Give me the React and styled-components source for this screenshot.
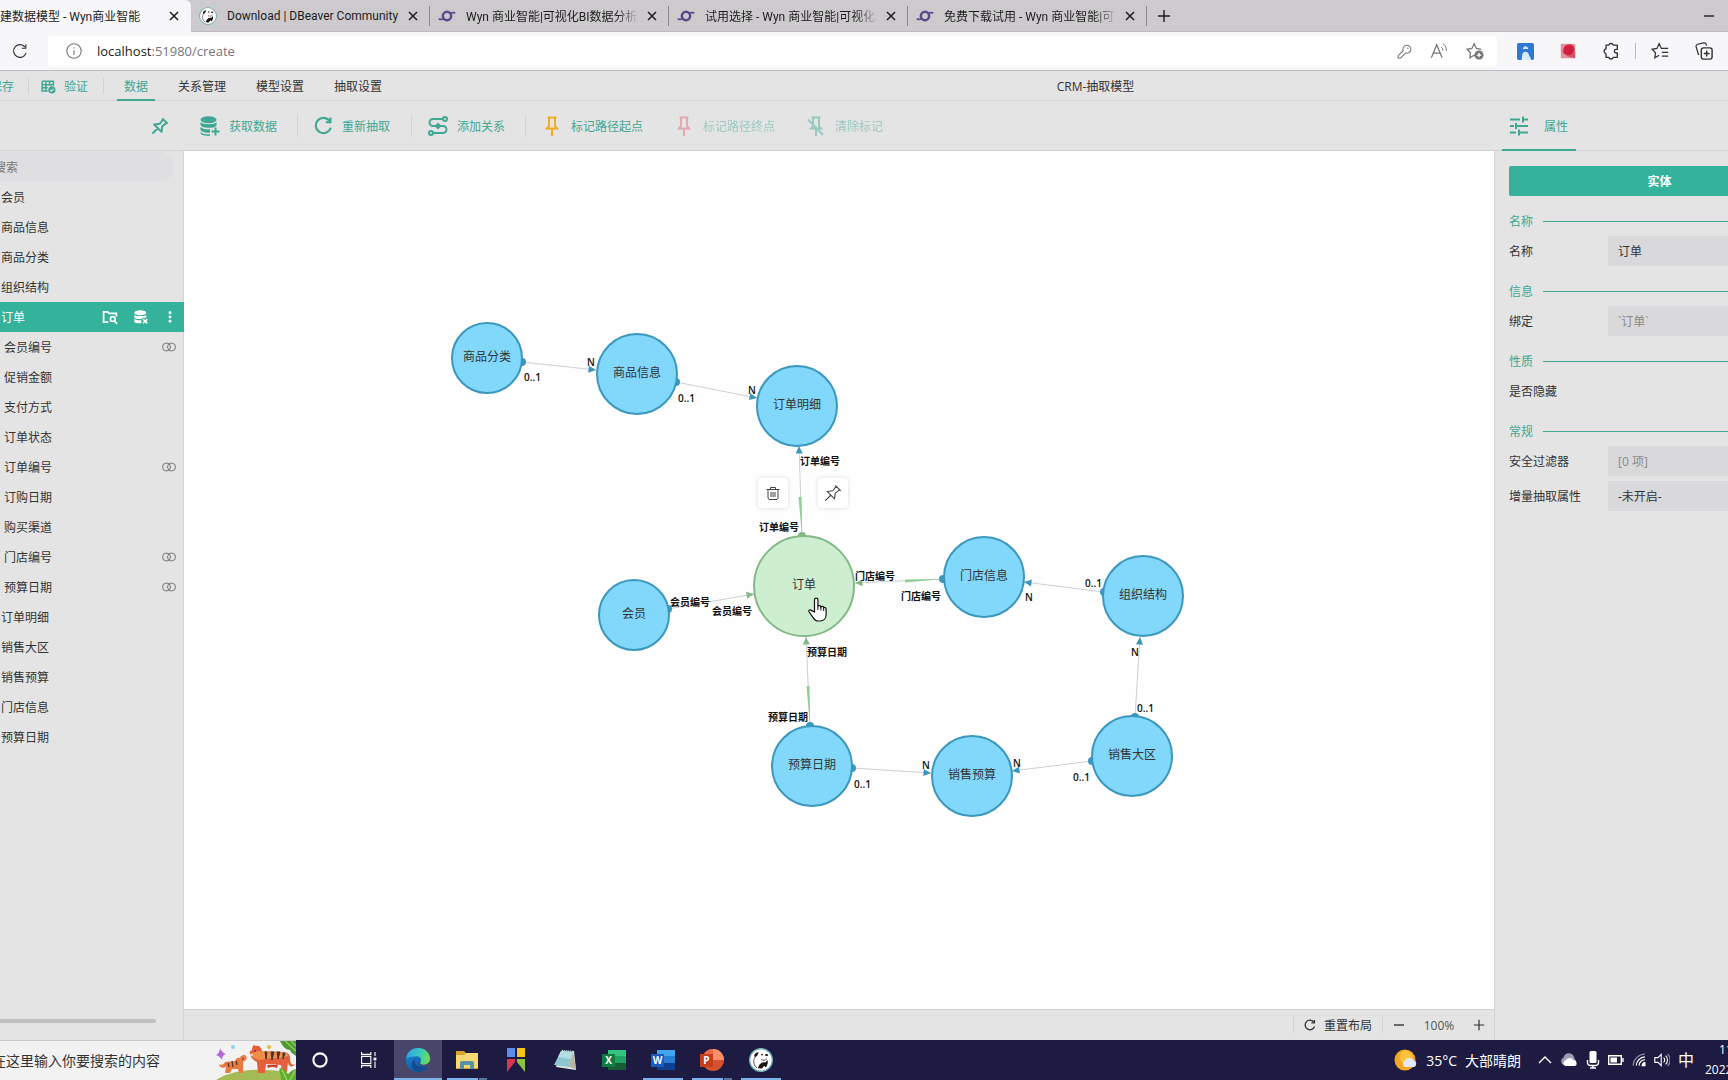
import React from "react";
import styled, { createGlobalStyle, css } from "styled-components";

const colors = {
  primary: "#35b29b",
  primaryText: "#3fa892",
  text: "#333",
  panel: "#e4e4e4",
  field: "#d9d9db",
  line: "#d3d3d5",
  taskbar: "#1d1b41",
  blue: "#82d8fb",
  blueDark: "#3a97bd",
  green: "#cdefd0",
  greenDark: "#84b987",
};

const GlobalStyle = createGlobalStyle`
  * {
    box-sizing: border-box;
  }

  body {
    margin: 0;
    overflow: hidden;
  }

  body, button, input, select {
    font-family: "Open Sans", "Noto Sans CJK SC", sans-serif;
    font-size: 12px;
  }

  button, input, select {
    border: 0;
    padding: 0;
    margin: 0;
    color: inherit;
    background: none;
  }

  svg {
    display: block;
    flex: none;
  }
`;

/* ---------- icons ---------- */

const Svg = ({ w = 16, h, box = "0 0 20 20", children }) => (
  <svg
    width={w}
    height={h || w}
    viewBox={box}
    fill="none"
    stroke="currentColor"
    strokeWidth="1.4"
    aria-hidden="true"
  >
    {children}
  </svg>
);

const CloseIcon = () => (
  <Svg w={10} box="0 0 10 10">
    <path d="M1 1l8 8M9 1l-8 8" strokeWidth="1.5" />
  </Svg>
);

const PlusIcon = ({ w = 14 }) => (
  <Svg w={w} box="0 0 14 14">
    <path d="M7 1v12M1 7h12" />
  </Svg>
);

const WynLogo = () => (
  <Svg w={18}>
    <g stroke="#5b4a8a" strokeLinecap="round">
      <circle cx="10" cy="10" r="4.6" strokeWidth="2.8" />
      <path d="M1.5 13.5c1.8.4 3.4.2 5-.5M18.5 6.5c-1.8-.5-3.4-.3-5 .5" strokeWidth="2" />
    </g>
  </Svg>
);

const BeaverLogo = ({ w = 18 }) => (
  <Svg w={w} box="0 0 24 24">
    <circle cx="12" cy="12" r="11.3" fill="#fff" stroke="#78b6b9" strokeWidth="1.4" />
    <g fill="#1d1512" stroke="none">
      <path d="M9.8 4.2C7.500 4 5.600 5.400 5.200 7.800l.8 1.400 2-1.200z" />
      <circle cx="13" cy="6.600" r="0.900" />
      <ellipse cx="17.600" cy="7" rx="1.600" ry="1.100" />
      <path d="M13 14.500l3.600-.2 1.800-2.300c.9 2.600 0 5.600-1.900 7.400l-1.300-1.600-2.200 2.800-4.200-.4 1.700-3.600z" />
    </g>
    <path d="M6 9c-1.500 2.500-1.600 5-.6 8l2.400 3M12 11.500c2 1.200 4.500.8 6-.8" stroke="#3a2e28" strokeWidth="0.800" />
  </Svg>
);

const ReloadIcon = ({ w = 16, bold }) => (
  <Svg w={w}>
    <g strokeWidth={bold ? 2.2 : 1.4}>
      <path d="M17.6 12.3A8 8 0 1 1 16.3 5.1" />
      <path d="M17.3 1.5v5h-5" />
    </g>
  </Svg>
);

const InfoIcon = () => (
  <Svg>
    <circle cx="10" cy="10" r="9" />
    <path d="M10 9v6M10 5.3v1.6" />
  </Svg>
);

const KeyIcon = () => (
  <Svg w={15}>
    <path d="M8.3 9a5.3 5.3 0 1 1 3.2 3l-6.600 6.600H1.500v-3z" />
    <circle cx="14.5" cy="5.600" r="1" fill="currentColor" stroke="none" />
  </Svg>
);

const ReadAloudIcon = () => (
  <Svg w={18}>
    <path d="M1.5 17.500L7.500 3l6 14.500M3.800 12.300h7.400" />
    <path d="M12.5 5.500a4 4 0 0 1 1.500 4M14.500 2a8 8 0 0 1 3.500 8" strokeWidth="1.100" />
  </Svg>
);

const StarAddIcon = () => (
  <Svg w={18}>
    <path d="M12 16.200L9 14.800l-4.700 2.700.7-5.500-3.800-3.900 5.400-.9L9 2l2.500 5.200 5.400.9" />
    <circle cx="14.500" cy="14.500" r="5" fill="currentColor" stroke="none" />
    <path d="M14.500 12v5M12 14.500h5" stroke="#fff" />
  </Svg>
);

const FavoritesIcon = () => (
  <Svg w={18}>
    <path d="M9 14.800l-4.700 2.700.7-5.500-3.800-3.900 5.400-.9L9 2l2.500 5.200h7.700M12 11.500h7.200M12 15.800h7.200" />
  </Svg>
);

const ProfileExtIcon = () => (
  <Svg w={17}>
    <rect width="20" height="20" rx="2" fill="#2f78d3" stroke="none" />
    <path d="M5.500 20l.5-6a4.200 5.500 0 0 1 8 0l3 6z" fill="#dcebfa" stroke="none" />
    <path d="M7 7V5h2V3.500h2V5h2v2z" fill="#dcebfa" stroke="none" />
  </Svg>
);

const RedExtIcon = () => (
  <Svg w={16}>
    <path d="M1 1h18v18H1z" fill="#e0909f" stroke="none" />
    <path d="M1 7q3 6 9 8l9-4v8C10 18 3 14 1 7z" fill="#cf5369" stroke="none" />
    <path d="M4 10c0-5 3-8 8-8 4 0 6 3 6 6s-3 7-7 7-7-2-7-5z" fill="#d61f3c" stroke="none" />
  </Svg>
);

const PuzzleIcon = () => (
  <Svg w={18}>
    <path
      d="M4.500 3.500h3a2.600 2.600 0 0 1 5 0H17v4.700h-1.300a2 2 0 0 0 0 4H17V17h-4.500a2.600 2.600 0 0 1-5 0h-3v-3.700a3 3 0 0 1 0-5.800z"
      strokeWidth="1.500"
      strokeLinejoin="round"
    />
  </Svg>
);

const CollectionsIcon = () => (
  <Svg w={18}>
    <path d="M4 14.500L1.300 5.500a2.500 2.500 0 0 1 1.700-3L9.500 1a2.500 2.500 0 0 1 3 1.800l.4 1.200" />
    <rect x="7" y="6.500" width="12" height="12.500" rx="2.500" strokeWidth="1.600" />
    <path d="M13 9.500v6.500M9.800 12.800h6.500" strokeWidth="1.600" />
  </Svg>
);

const TableCheckIcon = () => (
  <Svg w={15}>
    <path d="M1.500 3h15v6M1.500 3v13H9M1.500 7.500h15M1.500 11.800H9M6.500 3v13M11.500 3v6" strokeWidth="2" />
    <circle cx="14.500" cy="14.500" r="4.800" fill="currentColor" stroke="none" />
    <path d="M12.200 14.500l1.700 1.700 3-3" stroke={colors.panel} />
  </Svg>
);

const PinIcon = ({ bold }) => (
  <Svg w={18}>
    <path
      d="M12.500 1.500l6 6M13.500 2.700L9.800 7.500 3.500 8.300l8.200 8.200.8-6.300 4.800-3.700M7.500 12.500L1.500 18.500"
      strokeWidth={bold ? 2.2 : 1.2}
      strokeLinejoin="round"
    />
  </Svg>
);

const DbAddIcon = () => (
  <Svg w={20}>
    <g fill="currentColor" stroke="none">
      <ellipse cx="8.500" cy="3.700" rx="8" ry="3.500" />
      <path d="M.5 6c2 3 14 3 16 0v3.500c-2 2-3 2.300-8 2.300s-7.500-1.300-8-3z" />
      <path d="M.5 11c1.500 2 5 2.500 9.500 2.300v3.500C5 17 1.500 16 .5 14zM.5 16c2 2 5 2.300 9.500 2.300v1.500C5 20.200 1 19 .5 17z" />
    </g>
    <path d="M15.500 11.500v8M11.500 15.500h8" strokeWidth="2" />
  </Svg>
);

const RelationIcon = () => (
  <Svg w={20}>
    <g strokeWidth="2">
      <path d="M14.500 3H5a3.500 3.500 0 0 0 0 7h10a3.500 3.500 0 0 1 0 7H5.500" />
      <circle cx="17" cy="3" r="2" />
      <circle cx="3" cy="17" r="2" />
    </g>
    <path d="M10 6.500l3.500 3.500-3.500 3.500L6.500 10z" fill="currentColor" stroke="none" />
  </Svg>
);

const PathPinIcon = ({ off }) => (
  <Svg w={20}>
    <path d="M5.500 1.500h9M7 1.500v8.500l-2 2.500h10l-2-2.500V1.500M10 12.500V20" strokeWidth="2" />
    {off && <path d="M2 3.500l15 15.500" strokeWidth="2" />}
  </Svg>
);

const TuneIcon = () => (
  <Svg w={20}>
    <path d="M1 3.500h10M14 3.500h5M14 .5v6M1 10h4M8 10h11M7 7v6M1 16.500h6M10 16.500h9M10 13.500v6" strokeWidth="2" />
  </Svg>
);

const FolderSearchIcon = () => (
  <Svg w={16}>
    <path d="M8 16.500H2v-13h5l2 2h9v4" strokeWidth="2.200" />
    <circle cx="13.500" cy="12.500" r="3" strokeWidth="2" />
    <path d="M15.500 15l3.500 3.500" strokeWidth="2.200" />
  </Svg>
);

const DbRemoveIcon = () => (
  <Svg w={14}>
    <g fill="currentColor" stroke="none">
      <ellipse cx="9" cy="4" rx="8.500" ry="3.500" />
      <path d="M.5 7c3 2.300 14 2.300 17 0v4H12v1.500c-5 .6-9 .2-11.500-1.500z" />
      <path d="M.5 13c3 1.500 6 2 10 1.600V19c-5 .3-9-.3-10-2z" />
    </g>
    <path d="M13 13l6 6M19 13l-6 6" strokeWidth="2.200" />
  </Svg>
);

const MoreIcon = () => (
  <Svg w={12}>
    <g fill="currentColor" stroke="none">
      <circle cx="10" cy="3" r="2.400" />
      <circle cx="10" cy="10" r="2.400" />
      <circle cx="10" cy="17" r="2.400" />
    </g>
  </Svg>
);

const LinkedIcon = () => (
  <Svg w={14} h={10} box="0 0 14 10">
    <g stroke="#777" strokeWidth="1">
      <rect x="0.500" y="1" width="8" height="8" rx="4" />
      <rect x="5.500" y="1" width="8" height="8" rx="4" />
    </g>
  </Svg>
);

const TrashIcon = () => (
  <Svg w={14} box="0 0 14 14">
    <g strokeWidth="1" stroke="#444">
      <path d="M.5 3.500h13M4.500 3.500v-2h5v2M2 3.500v8.500l1 1.500h8l1-1.500V3.500M5 6v5M7 6v5M9 6v5" />
    </g>
  </Svg>
);

const HandCursor = () => (
  <Svg w={19} h={25} box="0 0 19 25">
    <path
      d="M6.500 15V2.800a1.700 1.700 0 0 1 3.400 0v6.400c.4-1 2.800-.8 3 .7.5-.9 2.600-.6 2.800.8.5-.7 2.400-.3 2.400 1.300v5.500c0 3.800-2.300 6.500-6 6.500h-2c-2.500 0-3.700-1.300-5-3.400L1 14.800c-.7-1.500 1-2.600 2.300-1.400z"
      fill="#fff"
      stroke="#111"
      strokeWidth="1.200"
    />
    <path d="M9.900 9v4M12.900 10v3.500M15.700 11v3" stroke="#111" strokeWidth="1" />
  </Svg>
);

const TigerArt = () => (
  <svg width="82" height="39" viewBox="0 0 82 39" aria-hidden="true">
    <path d="M2 39c14-9 34-11 50-10 14 0 24 3 30 8v2z" fill="#a5bb55" />
    <path d="M66 0h16v15c-4-3-5-3-6-6-4 0-7-3-10-9z" fill="#4b9a35" />
    <path d="M71 0l11 10M77 0l5 5" stroke="#8fcb4e" strokeWidth="1.500" />
    <path d="M6 7q2 5 6 6-4 1-4 6-2-4-6-5 4-2 4-7z" fill="#b766d8" />
    <circle cx="19" cy="6" r="2" fill="#8fd2ef" />
    <circle cx="55" cy="6" r="2" fill="#f0b93c" />
    <path d="M36 13c-1-2 0-3 2-4 0-4 2-6 4-4 3-1 5 1 6 5l20 1c5 0 8 2 8 6 0 4 1 8 5 6-2 4-7 3-7-2l-1 10h-5l-1-7-15-1-1 9h-7l-1-11c-4-2-6-4-7-8z" fill="#e4603a" />
    <path d="M36 13c4-2 8-3 12-3l20 1c4 0 6 2 6 4-10 4-22 1-27 4-4 0-9-2-11-6z" fill="#f08f4c" />
    <path d="M51 11l1 7 1-7zM57 11l1 8 2-8zM63 11l1 7 2-7zM69 12l0 6 2-6z" fill="#4e3226" stroke="#4e3226" />
    <path d="M53 24h11l-1 3q-5-2-9 0z" fill="#c8432f" />
    <path d="M21 20c1-3 3-4 5-3 1-3 3-3 5-3l2 3-4 6v9h-4l-1-4h-6l-2 4h-5l1-6c-5 2-7-1-7-3 3 2 5 0 6-2z" fill="#ea7a42" />
    <path d="M14 22l1 4M18 20l1 6M22 20l1 4" stroke="#4e3226" strokeWidth="1.200" />
    <circle cx="29" cy="18" r="0.700" fill="#222" />
    <path d="M36 14h3M29 21h3" stroke="#fff" strokeWidth="1.200" />
    <circle cx="41" cy="10" r="0.800" fill="#222" />
    <path d="M67 39c0-7-3-9-1-12 5 1 6 3 8 7 1-3 4-5 8-6v11z" fill="#5fae34" />
    <path d="M68 29l5 10M81 30l-5 9" stroke="#a8da5c" strokeWidth="1.200" />
  </svg>
);

const CortanaIcon = () => (
  <Svg w={16}>
    <circle cx="10" cy="10" r="8.300" strokeWidth="2.600" />
  </Svg>
);

const TaskViewIcon = () => (
  <Svg w={16}>
    <path d="M.7 0v3h11.600V0M.7 20v-3h11.600v3M.7 5.500h11.600v9H.7zM17.500 0v5M17.500 12v8" />
    <rect x="15.700" y="7" width="3.500" height="3.500" fill="currentColor" stroke="none" />
  </Svg>
);

const EdgeIcon = () => (
  <svg width="24" height="24" viewBox="0 0 24 24" aria-hidden="true">
    <defs>
      <linearGradient id="edgeTop" x1="0" x2="1" y1="0.300" y2="0.500">
        <stop offset="0" stopColor="#2ea3e0" />
        <stop offset="0.550" stopColor="#38c8c0" />
        <stop offset="1" stopColor="#6be04d" />
      </linearGradient>
      <linearGradient id="edgeBody" x1="0" x2="0.600" y1="0" y2="1">
        <stop offset="0" stopColor="#1b8bd4" />
        <stop offset="1" stopColor="#0c59a4" />
      </linearGradient>
    </defs>
    <circle cx="12" cy="12" r="12" fill="url(#edgeBody)" />
    <path d="M.2 10.500C1 4 6 0 12 0c7 0 12 5 12 10.500 0 4-3 6.300-6.500 6.300-2.500 0-4-1-3.200-2.300 1.800-3 0-6.300-3.800-6.300C6 8.200 2.500 9.500.2 10.500z" fill="url(#edgeTop)" />
    <path d="M9.600 10.500c-2.500 5.500 2 10.500 12 7.500 1-.3 1.400 0 .8.800-3.200 4.500-9 6-13.900 4.200-4.500-3-3.700-10 1.100-12.500z" fill="#144c94" />
    <path d="M14.300 14.500c-1 1.500.7 2.400 3.200 2.400 2.300 0 4.600-1 5.700-3l.8 3-2.200 1.500c-4 .9-9.500 0-10.300-4.500z" fill="#4a466b" />
  </svg>
);

const ExplorerIcon = () => (
  <svg width="24" height="24" viewBox="0 0 24 24" aria-hidden="true">
    <path d="M1 3h8l2 2h12v16H1z" fill="#d9a02e" />
    <path d="M1 7h8l2-2h12v15H1z" fill="#f8d873" />
    <path d="M5 21v-6q0-2 2-2h10q2 0 2 2v6h-4v-4H9v4z" fill="#5691a9" />
  </svg>
);

const FourColorIcon = () => (
  <svg width="20" height="24" viewBox="0 0 20 24" aria-hidden="true">
    <path d="M1 0h8v9H1z" fill="#5b8cf0" />
    <path d="M11 0h8v9h-8z" fill="#f6c51d" />
    <path d="M1 11h8v3l-8 10z" fill="#d93550" />
    <path d="M11 11h8v13l-8-10z" fill="#8ac43f" />
  </svg>
);

const NotepadIcon = () => (
  <svg width="24" height="24" viewBox="0 0 24 24" aria-hidden="true">
    <path d="M9 2l12 1 2 19-20-3z" fill="#e4e4dc" />
    <path d="M8 3l12 1-4 15-15-2z" fill="#8cc7cf" />
    <path d="M8 3l12 1-2 7L5 9z" fill="#b4dde2" />
    <path d="M20 4l3 17-7-2z" fill="#b9b29c" />
    <path d="M8 2l12 1.500" stroke="#555" strokeWidth="1.200" strokeDasharray="1 1" />
  </svg>
);

const OfficeBadge = styled.span`
  display: grid;
  place-items: center;
  width: 13px;
  height: 13px;
  grid-area: 1 / 1;
  background: ${(props) => props.$color};
  color: #fff;
  font-size: 10px;
  font-weight: 700;
  line-height: 13px;
`;

const OfficeBox = styled.span`
  display: grid;
  align-items: center;

  > svg {
    grid-area: 1 / 1;
  }
`;

const OfficeIcon = ({ letter, dark, shades, round }) => (
  <OfficeBox>
    <svg width="24" height="22" viewBox="0 0 24 22" aria-hidden="true">
      {round ? (
        <>
          <circle cx="13" cy="11" r="11" fill={shades[2]} />
          <path d="M13 0v11h11A11 11 0 0 0 13 0z" fill={shades[0]} />
          <path d="M13 0A11 11 0 0 0 2 11h11z" fill={shades[1]} />
        </>
      ) : (
        <>
          <path d="M6 1h18v20H6z" fill={shades[2]} />
          <path d="M6 1h18v6H6z" fill={shades[0]} />
          <path d="M6 7h18v7H6z" fill={shades[1]} />
        </>
      )}
    </svg>
    <OfficeBadge $color={dark}>{letter}</OfficeBadge>
  </OfficeBox>
);

const WeatherIcon = () => (
  <svg width="24" height="22" viewBox="0 0 24 22" aria-hidden="true">
    <circle cx="11" cy="11" r="10.500" fill="#f5a623" />
    <circle cx="12" cy="8" r="6.500" fill="#fbc23c" />
    <path d="M11 18a3.500 3.500 0 0 1 0-6.500 5 5 0 0 1 8.500-.5A3.700 3.700 0 0 1 20 18z" fill="#e3e8f6" />
  </svg>
);

const CloudIcon = () => (
  <svg width="18" height="14" viewBox="0 0 18 14" aria-hidden="true">
    <path d="M4 12a4 4 0 0 1-.5-7.500A5.500 5.500 0 0 1 14 4l2 5z" fill="#9c9bb0" />
    <path d="M5 13a3.300 3.300 0 0 1 1-6 4.500 4.500 0 0 1 7.500 0A3.200 3.200 0 0 1 15 13z" fill="#fff" />
  </svg>
);

const MicIcon = () => (
  <Svg w={14} h={18} box="0 0 14 18">
    <rect x="3.500" y="0" width="7" height="12" rx="1.500" fill="#fff" stroke="none" />
    <path d="M1.500 9v2.500c0 2 1.500 3 3.500 3h4c2 0 3.500-1 3.500-3V9M7 14.500V17M4 17h6" />
  </Svg>
);

const BatteryIcon = () => (
  <Svg w={16} h={10} box="0 0 16 10">
    <path d="M.7.7h12.600v8.600H.7zM15 3v4" />
    <path d="M2.500 2.500H9v5H2.500z" fill="#fff" stroke="none" />
  </Svg>
);

const WifiIcon = () => (
  <Svg w={14}>
    <g strokeWidth="1.600">
      <path d="M1.500 18C2 9 9 2 18.500 1.500" opacity=".5" />
      <path d="M6 18c.5-7 6-12 12.500-12.500M10 18c.5-4.500 4-8 8.500-8.500" />
      <path d="M14.500 18c.3-2.500 2-4 4-4.200V18z" fill="#fff" />
    </g>
  </Svg>
);

const SpeakerIcon = () => (
  <Svg w={16}>
    <path d="M1 7v6h4l4 4V3L5 7zM12 7a4 4 0 0 1 0 6M14.500 4.500a7.500 7.500 0 0 1 0 11" />
    <path d="M17 2.500a10.500 10.500 0 0 1 0 15" opacity=".5" />
  </Svg>
);

/* ---------- browser chrome ---------- */

const Page = styled.div`
  display: flex;
  flex-direction: column;
  height: 100vh;
  overflow: hidden;
  color: ${colors.text};
  background: ${colors.panel};
`;

const TabStrip = styled.div`
  display: flex;
  align-items: stretch;
  flex: none;
  height: 32px;
  margin-left: -48px;
  background: #cdcacd;
  color: #1c1c1c;
  font-family: Roboto, "Noto Sans CJK SC", sans-serif;
`;

const Tab = styled.div`
  display: flex;
  align-items: center;
  flex: 0 1 239px;
  padding: 0 12px 0 8px;
  min-width: 0;
  border-bottom: 1px solid #bcb9bd;

  ${({ $active }) =>
    $active &&
    css`
      background: #f7f6f9;
      border-bottom-color: #f7f6f9;
      border-radius: 0 6px 0 0;
    `}

  ${({ $divider }) =>
    $divider &&
    css`
      background: linear-gradient(#8c8a8d, #8c8a8d) right 6px / 1px 20px no-repeat;
    `}
`;

const TabTitle = styled.span`
  flex: 1;
  margin: 0 8px 0 10px;
  overflow: hidden;
  white-space: nowrap;
  ${({ $fade }) =>
    $fade &&
    css`
      mask-image: linear-gradient(90deg, #000 calc(100% - 22px), transparent);
    `}
`;

const TabFill = styled.div`
  display: flex;
  align-items: center;
  justify-content: space-between;
  flex: 1;
  padding: 0 14px 0 10px;
  border-bottom: 1px solid #bcb9bd;
`;

const IconButton = styled.button`
  display: grid;
  place-items: center;
`;

const AddressBar = styled.div`
  display: flex;
  align-items: center;
  flex: none;
  height: 39px;
  padding: 0 15px 0 12px;
  gap: 20px;
  background: #f7f6f9;
  border-bottom: 1px solid #bdbabe;
`;

const AddressField = styled.div`
  display: flex;
  align-items: center;
  flex: 1;
  height: 30px;
  padding: 0 13px 0 18px;
  gap: 18px;
  border-radius: 4px;
  background: #fff;
  color: #77757a;
`;

const Url = styled.div`
  flex: 1;
  margin-left: -3px;
  font-size: 13px;

  b {
    font-weight: 400;
    color: #1c1c1c;
  }
`;

const Extensions = styled.div`
  display: flex;
  align-items: center;
  gap: 26px;
`;

const ExtDivider = styled.i`
  width: 1px;
  height: 16px;
  margin: 0 -11px;
  background: #bbb;
`;

/* ---------- application ---------- */

const Header = styled.header`
  display: flex;
  align-items: center;
  flex: none;
  height: 30px;
  border-bottom: 1px solid ${colors.line};
`;

const HeaderActions = styled.div`
  display: flex;
  align-items: center;
  margin-left: -10px;
  padding-top: 1px;
  color: ${colors.primaryText};
`;

const HeaderAction = styled.button`
  display: flex;
  align-items: center;
  gap: 8px;
`;

const Divider = styled.i`
  width: 1px;
  height: ${(props) => props.$h || 16}px;
  margin: ${(props) => props.$m || "0"};
  background: #d2d2d2;
`;

const Nav = styled.nav`
  display: flex;
  height: 30px;
  gap: 16px;
  flex: 0 0 346px;
`;

const NavLink = styled.a`
  padding: 1px 7px 0;
  line-height: 29px;
  text-decoration: none;
  color: ${(props) => (props.$active ? colors.primaryText : colors.text)};
  box-shadow: inset 0 -2px ${(props) => (props.$active ? colors.primaryText : "transparent")};
`;

const Title = styled.h1`
  flex: 1;
  margin: 0;
  font-size: 12px;
  font-weight: 400;
  text-align: center;
`;

const Tools = styled.div`
  display: flex;
  flex: none;
  height: 50px;
  border-bottom: 1px solid ${colors.line};
`;

const SideHead = styled.div`
  display: flex;
  align-items: center;
  justify-content: flex-end;
  flex: 0 0 184px;
  padding-right: 15px;
  color: ${colors.primaryText};
`;

const ToolButtons = styled.div`
  display: flex;
  align-items: center;
  flex: 1;
`;

const ToolButton = styled.button`
  display: flex;
  align-items: center;
  gap: 9px;
  padding: 0 15px 0 16px;
  height: 30px;
  color: ${colors.primaryText};
  opacity: ${(props) => (props.disabled ? 0.45 : 1)};

  > svg {
    color: ${(props) => props.$icon || "inherit"};
  }
`;

const PropHead = styled.div`
  flex: 0 0 233px;
  padding-left: 7px;
`;

const PropTab = styled.button`
  display: flex;
  align-items: center;
  gap: 15px;
  height: 50px;
  width: 74px;
  padding: 2px 0 0 7px;
  color: ${colors.primaryText};
  border-bottom: 2px solid ${colors.primaryText};
`;

const Body = styled.div`
  display: flex;
  flex: 1;
  min-height: 0;
`;

const Sidebar = styled.aside`
  display: flex;
  flex-direction: column;
  flex: 0 0 184px;
  min-width: 0;
  overflow: hidden;
  background: linear-gradient(${colors.line}, ${colors.line}) right / 1px 100% no-repeat;
`;

const SearchBox = styled.input`
  flex: none;
  width: 190px;
  height: 30px;
  margin: 1px 0 0 -16px;
  padding: 0 10px;
  border-radius: 15px;
  background: #dfdfe2;

  &::placeholder {
    color: #777;
    opacity: 1;
  }
`;

const Tree = styled.ul`
  flex: 1;
  margin: 0;
  padding: 0;
  list-style: none;
`;

const TreeRow = styled.li`
  display: flex;
  align-items: center;
  justify-content: space-between;
  height: 30px;
  padding: 0 8px 0 ${(props) => (props.$child ? 4 : 1)}px;

  ${({ $selected }) =>
    $selected &&
    css`
      background: ${colors.primary};
      color: #fff;
    `}
`;

const RowActions = styled.span`
  display: flex;
  align-items: center;
  gap: 16px;
`;

const ScrollThumb = styled.div`
  width: 156px;
  height: 4px;
  margin-bottom: 17px;
  border-radius: 0 2px 2px 0;
  background: #bfbfbf;
`;

const Workspace = styled.main`
  display: flex;
  flex-direction: column;
  flex: 1;
  min-width: 0;
`;

const Canvas = styled.div`
  position: relative;
  flex: 1;
  overflow: hidden;
  background: #fefefe;
`;

const Links = styled.svg`
  position: absolute;
  inset: 0;
  width: 100%;
  height: 100%;

  text {
    font-size: 10px;
    font-weight: 600;
    fill: #111;
  }
`;

const Node = styled.div`
  position: absolute;
  left: ${(props) => props.$x - props.$r}px;
  top: ${(props) => props.$y - props.$r}px;
  width: ${(props) => props.$r * 2}px;
  height: ${(props) => props.$r * 2}px;
  display: grid;
  place-items: center;
  padding-bottom: 4px;
  border-radius: 50%;
  border: 2px solid ${(props) => (props.$selected ? colors.greenDark : colors.blueDark)};
  background: ${(props) => (props.$selected ? colors.green : colors.blue)};
`;

const FloatButton = styled.button`
  position: absolute;
  left: ${(props) => props.$x}px;
  top: ${(props) => props.$y}px;
  display: grid;
  place-items: center;
  width: 30px;
  height: 30px;
  border-radius: 4px;
  background: #fff;
  color: #444;
  box-shadow: 0 0 5px rgba(0, 0, 30, 0.14);
`;

const Pointer = styled.div`
  position: absolute;
  left: 624px;
  top: 446px;
`;

const StatusBar = styled.div`
  display: flex;
  align-items: center;
  justify-content: flex-end;
  flex: none;
  height: 31px;
  padding-right: 9px;
  border-top: 1px solid ${colors.line};
`;

const ResetButton = styled.button`
  display: flex;
  align-items: center;
  gap: 8px;
  padding: 0 10px;
`;

const ZoomValue = styled.span`
  width: 68px;
  text-align: center;
  color: #555;
`;

const Props = styled.aside`
  flex: 0 0 234px;
  overflow: hidden;
  border-left: 1px solid ${colors.line};
`;

const PropsInner = styled.div`
  width: 315px;
  padding: 15px 0 0 14px;
`;

const EntityButton = styled.button`
  width: 100%;
  height: 30px;
  border-radius: 2px;
  background: ${colors.primary};
  color: #fff;
  font-weight: 600;
`;

const Section = styled.h2`
  display: flex;
  align-items: center;
  gap: 10px;
  height: 30px;
  margin: 10px 0 0;
  font-size: 12px;
  font-weight: 400;
  color: ${colors.primaryText};

  &:after {
    content: "";
    flex: 1;
    height: 1px;
    background: ${colors.primaryText};
  }
`;

const Field = styled.label`
  display: flex;
  align-items: center;
  height: 30px;
  margin-bottom: ${(props) => (props.$tight ? 5 : 0)}px;

  > span {
    flex: 0 0 99px;
  }

  input,
  select,
  button {
    flex: 1;
    height: 30px;
    padding: 0 10px;
    appearance: none;
    text-align: left;
    background: ${colors.field};
    color: ${(props) => (props.$muted ? "#8a8a8a" : colors.text)};
  }
`;

/* ---------- taskbar ---------- */

const Taskbar = styled.footer`
  display: flex;
  flex: none;
  height: 40px;
  background: ${colors.taskbar};
  color: #fff;
`;

const TaskSearch = styled.div`
  display: flex;
  justify-content: space-between;
  width: 296px;
  overflow: hidden;
  background: #f3f2f3;
  border-top: 1px solid #c9c9cb;

  input {
    width: 180px;
    margin-left: -8px;
    font-size: 14px;

    &::placeholder {
      color: #333;
      opacity: 1;
    }
  }
`;

const TaskList = styled.div`
  display: flex;
  gap: 1px;
  flex: 1;
`;

const underlines = {
  none: "none",
  one: "linear-gradient(#7db3ea, #7db3ea) center bottom / 40px 2px no-repeat",
  full: "linear-gradient(#7db3ea, #7db3ea) center bottom / 48px 2px no-repeat",
  stack: "linear-gradient(90deg, #7db3ea 31px, #1d1b41 31px 32px, #56789f 32px) center bottom / 40px 2px no-repeat",
};

const TaskButton = styled.button`
  display: grid;
  place-items: center;
  width: 48px;
  color: #fff;
  background: ${(props) => underlines[props.$line || "none"]};
  background-color: ${(props) => (props.$active ? "#4a466b" : "transparent")};
`;

const Tray = styled.div`
  display: flex;
  align-items: center;
  gap: 8px;
`;

const Weather = styled.div`
  display: flex;
  align-items: center;
  gap: 8px;
  margin-right: 9px;
  font-size: 14px;
`;

const Ime = styled.span`
  font-size: 16px;
  line-height: 20px;
`;

const Clock = styled.div`
  display: flex;
  flex-direction: column;
  align-items: flex-end;
  margin-left: 3px;
  width: 23px;
  line-height: 20px;
  overflow: hidden;
`;

const Time = styled.time`
  width: ${(props) => (props.$short ? 9 : 23)}px;
  white-space: nowrap;
`;

/* ---------- data ---------- */

const tabs = [
  { title: "创建数据模型 - Wyn商业智能", icon: <WynLogo />, active: true },
  { title: "Download | DBeaver Community", icon: <BeaverLogo />, divider: true },
  { title: "Wyn 商业智能|可视化BI数据分析", icon: <WynLogo />, divider: true, fade: true },
  { title: "试用选择 - Wyn 商业智能|可视化", icon: <WynLogo />, divider: true, fade: true },
  { title: "免费下载试用 - Wyn 商业智能|可", icon: <WynLogo />, divider: true, fade: true },
];

const tree = [
  { name: "会员" },
  { name: "商品信息" },
  { name: "商品分类" },
  { name: "组织结构" },
  { name: "订单", selected: true },
  { name: "会员编号", child: true, linked: true },
  { name: "促销金额", child: true },
  { name: "支付方式", child: true },
  { name: "订单状态", child: true },
  { name: "订单编号", child: true, linked: true },
  { name: "订购日期", child: true },
  { name: "购买渠道", child: true },
  { name: "门店编号", child: true, linked: true },
  { name: "预算日期", child: true, linked: true },
  { name: "订单明细" },
  { name: "销售大区" },
  { name: "销售预算" },
  { name: "门店信息" },
  { name: "预算日期" },
];

const nodes = [
  { name: "商品分类", x: 303, y: 207, r: 36 },
  { name: "商品信息", x: 453, y: 223, r: 41 },
  { name: "订单明细", x: 613, y: 255, r: 41 },
  { name: "订单", x: 620, y: 435, r: 51, selected: true },
  { name: "会员", x: 450, y: 464, r: 36 },
  { name: "门店信息", x: 800, y: 426, r: 41 },
  { name: "组织结构", x: 959, y: 445, r: 41 },
  { name: "预算日期", x: 628, y: 615, r: 41 },
  { name: "销售预算", x: 788, y: 625, r: 41 },
  { name: "销售大区", x: 948, y: 605, r: 41 },
];

// from = dot on the source entity, to = arrow tip, flow = start of the highlight
const links = [
  { from: [338, 211], to: [412, 219] },
  { from: [492, 231], to: [573, 247] },
  { from: [618, 385], to: [615, 295], dotGreen: true, flow: [616, 346] },
  { from: [484, 458], to: [570, 443], tipGreen: true },
  { from: [759, 428], to: [671, 432], tipGreen: true, flow: [721, 430] },
  { from: [920, 441], to: [840, 431] },
  { from: [951, 566], to: [956, 486] },
  { from: [908, 610], to: [828, 620] },
  { from: [668, 617], to: [747, 622] },
  { from: [626, 575], to: [622, 486], tipGreen: true, flow: [624, 535] },
];

const labels = [
  ["0..1", 340, 230],
  ["N", 403, 215],
  ["0..1", 494, 251],
  ["N", 564, 243],
  ["订单编号", 616, 314],
  ["订单编号", 575, 380],
  ["会员编号", 486, 455],
  ["会员编号", 528, 464],
  ["门店编号", 671, 429],
  ["门店编号", 717, 449],
  ["N", 841, 450],
  ["0..1", 901, 436],
  ["N", 947, 505],
  ["0..1", 953, 561],
  ["N", 829, 616],
  ["0..1", 889, 630],
  ["0..1", 670, 637],
  ["N", 738, 618],
  ["预算日期", 584, 570],
  ["预算日期", 623, 505],
];

const Link = ({ from, to, flow, dotGreen, tipGreen }) => {
  const angle = (Math.atan2(to[1] - from[1], to[0] - from[0]) * 180) / Math.PI;
  const start = flow || from;
  const dx = from[0] - start[0];
  const dy = from[1] - start[1];
  const len = Math.hypot(dx, dy) || 1;
  const nx = (-dy / len) * 1.5;
  const ny = (dx / len) * 1.5;

  return (
    <g>
      <line x1={from[0]} y1={from[1]} x2={to[0]} y2={to[1]} stroke="#d0cfd4" />
      {flow && (
        <polygon
          points={`${flow[0] + nx},${flow[1] + ny} ${flow[0] - nx},${flow[1] - ny} ${from[0]},${from[1]}`}
          fill="#8fcf93"
        />
      )}
      <circle cx={from[0]} cy={from[1]} r="4" fill={dotGreen ? colors.greenDark : colors.blueDark} />
      <path
        d="M0 0l-7.500-3.500v7z"
        transform={`translate(${to[0]} ${to[1]}) rotate(${angle})`}
        fill={tipGreen ? colors.greenDark : colors.blueDark}
      />
    </g>
  );
};

const Browser = () => (
  <>
    <TabStrip>
      {tabs.map((tab) => (
        <Tab key={tab.title} $active={tab.active} $divider={tab.divider}>
          {tab.icon}
          <TabTitle $fade={tab.fade}>{tab.title}</TabTitle>
          <IconButton aria-label="关闭">
            <CloseIcon />
          </IconButton>
        </Tab>
      ))}
      <TabFill>
        <IconButton aria-label="新建标签页">
          <PlusIcon />
        </IconButton>
        <IconButton aria-label="最小化">
          <Svg w={10} box="0 0 10 10">
            <path d="M0 5h10" />
          </Svg>
        </IconButton>
      </TabFill>
    </TabStrip>
    <AddressBar>
      <IconButton aria-label="刷新">
        <ReloadIcon />
      </IconButton>
      <AddressField>
        <InfoIcon />
        <Url>
          <b>localhost</b>:51980/create
        </Url>
        <KeyIcon />
        <ReadAloudIcon />
        <StarAddIcon />
      </AddressField>
      <Extensions>
        <ProfileExtIcon />
        <RedExtIcon />
        <PuzzleIcon />
        <ExtDivider />
        <FavoritesIcon />
        <CollectionsIcon />
      </Extensions>
    </AddressBar>
  </>
);

const Properties = () => (
  <Props>
    <PropsInner>
      <EntityButton>实体</EntityButton>
      <Section>名称</Section>
      <Field>
        <span>名称</span>
        <input defaultValue="订单" />
      </Field>
      <Section>信息</Section>
      <Field $muted>
        <span>绑定</span>
        <input readOnly value="`订单`" />
      </Field>
      <Section>性质</Section>
      <Field as="div">
        <span>是否隐藏</span>
      </Field>
      <Section>常规</Section>
      <Field $muted $tight>
        <span>安全过滤器</span>
        <button>[0 项]</button>
      </Field>
      <Field>
        <span>增量抽取属性</span>
        <select>
          <option>-未开启-</option>
        </select>
      </Field>
    </PropsInner>
  </Props>
);

const App = () => (
  <Page>
    <GlobalStyle />
    <Browser />

    <Header>
      <HeaderActions>
        <HeaderAction>保存</HeaderAction>
        <Divider $m="0 12px 0 14px" />
        <HeaderAction>
          <TableCheckIcon />
          验证
        </HeaderAction>
        <Divider $m="0 13px 0 15px" />
      </HeaderActions>
      <Nav>
        <NavLink href="#data" $active>
          数据
        </NavLink>
        <NavLink href="#relations">关系管理</NavLink>
        <NavLink href="#model">模型设置</NavLink>
        <NavLink href="#extract">抽取设置</NavLink>
      </Nav>
      <Title>CRM-抽取模型</Title>
    </Header>

    <Tools>
      <SideHead>
        <IconButton aria-label="固定">
          <PinIcon bold />
        </IconButton>
      </SideHead>
      <ToolButtons>
        <ToolButton>
          <DbAddIcon />
          获取数据
        </ToolButton>
        <Divider $h={22} $m="0 0 0 5px" />
        <ToolButton>
          <ReloadIcon w={19} bold />
          重新抽取
        </ToolButton>
        <Divider $h={22} $m="0 0 0 6px" />
        <ToolButton>
          <RelationIcon />
          添加关系
        </ToolButton>
        <Divider $h={22} $m="0 0 0 5px" />
        <ToolButton $icon="#f5a91f">
          <PathPinIcon />
          标记路径起点
        </ToolButton>
        <ToolButton $icon="#e8607a" disabled>
          <PathPinIcon />
          标记路径终点
        </ToolButton>
        <ToolButton disabled>
          <PathPinIcon off />
          清除标记
        </ToolButton>
      </ToolButtons>
      <PropHead>
        <PropTab>
          <TuneIcon />
          属性
        </PropTab>
      </PropHead>
    </Tools>

    <Body>
      <Sidebar>
        <SearchBox placeholder="搜索" aria-label="搜索" />
        <Tree>
          {tree.map((row) => (
            <TreeRow key={row.name + (row.child ? "-field" : "")} $child={row.child} $selected={row.selected}>
              {row.name}
              {row.linked && <LinkedIcon />}
              {row.selected && (
                <RowActions>
                  <IconButton aria-label="预览">
                    <FolderSearchIcon />
                  </IconButton>
                  <IconButton aria-label="移除">
                    <DbRemoveIcon />
                  </IconButton>
                  <IconButton aria-label="更多">
                    <MoreIcon />
                  </IconButton>
                </RowActions>
              )}
            </TreeRow>
          ))}
        </Tree>
        <ScrollThumb />
      </Sidebar>

      <Workspace>
        <Canvas>
          <Links>
            {links.map((link) => (
              <Link key={link.from.join()} {...link} />
            ))}
            {labels.map(([text, x, y]) => (
              <text key={`${x}-${y}`} x={x} y={y}>
                {text}
              </text>
            ))}
          </Links>
          {nodes.map((node) => (
            <Node key={node.name} $x={node.x} $y={node.y} $r={node.r} $selected={node.selected}>
              {node.name}
            </Node>
          ))}
          <FloatButton $x={574} $y={327} aria-label="删除">
            <TrashIcon />
          </FloatButton>
          <FloatButton $x={634} $y={327} aria-label="固定节点">
            <PinIcon />
          </FloatButton>
          <Pointer>
            <HandCursor />
          </Pointer>
        </Canvas>
        <StatusBar>
          <Divider />
          <ResetButton>
            <ReloadIcon w={12} bold />
            重置布局
          </ResetButton>
          <Divider $m="0 10px 0 0" />
          <IconButton aria-label="缩小">
            <Svg w={12} box="0 0 12 12">
              <path d="M1 6h10" />
            </Svg>
          </IconButton>
          <ZoomValue>100%</ZoomValue>
          <IconButton aria-label="放大">
            <PlusIcon w={12} />
          </IconButton>
        </StatusBar>
      </Workspace>

      <Properties />
    </Body>

    <Taskbar>
      <TaskSearch>
        <input placeholder="在这里输入你要搜索的内容" aria-label="任务栏搜索" />
        <TigerArt />
      </TaskSearch>
      <TaskList>
        <TaskButton aria-label="Cortana">
          <CortanaIcon />
        </TaskButton>
        <TaskButton aria-label="任务视图">
          <TaskViewIcon />
        </TaskButton>
        <TaskButton aria-label="Edge" $line="full" $active>
          <EdgeIcon />
        </TaskButton>
        <TaskButton aria-label="文件资源管理器" $line="stack">
          <ExplorerIcon />
        </TaskButton>
        <TaskButton aria-label="应用">
          <FourColorIcon />
        </TaskButton>
        <TaskButton aria-label="记事本">
          <NotepadIcon />
        </TaskButton>
        <TaskButton aria-label="Excel">
          <OfficeIcon letter="X" dark="#107c41" shades={["#33c481", "#21a366", "#185c37"]} />
        </TaskButton>
        <TaskButton aria-label="Word" $line="one">
          <OfficeIcon letter="W" dark="#185abd" shades={["#41a5ee", "#2b7cd3", "#103f91"]} />
        </TaskButton>
        <TaskButton aria-label="PowerPoint" $line="stack">
          <OfficeIcon letter="P" dark="#c43e1c" shades={["#ff8f6b", "#ed6c47", "#d35230"]} round />
        </TaskButton>
        <TaskButton aria-label="DBeaver" $line="one">
          <BeaverLogo w={24} />
        </TaskButton>
      </TaskList>
      <Tray>
        <Weather>
          <WeatherIcon />
          <span>35°C</span>
          <span>大部晴朗</span>
        </Weather>
        <Svg w={14} h={10} box="0 0 14 10">
          <path d="M1 8l6-6 6 6" />
        </Svg>
        <CloudIcon />
        <MicIcon />
        <BatteryIcon />
        <WifiIcon />
        <SpeakerIcon />
        <Ime>中</Ime>
        <Clock>
          <Time $short>11</Time>
          <Time>2022</Time>
        </Clock>
      </Tray>
    </Taskbar>
  </Page>
);

export default App;
